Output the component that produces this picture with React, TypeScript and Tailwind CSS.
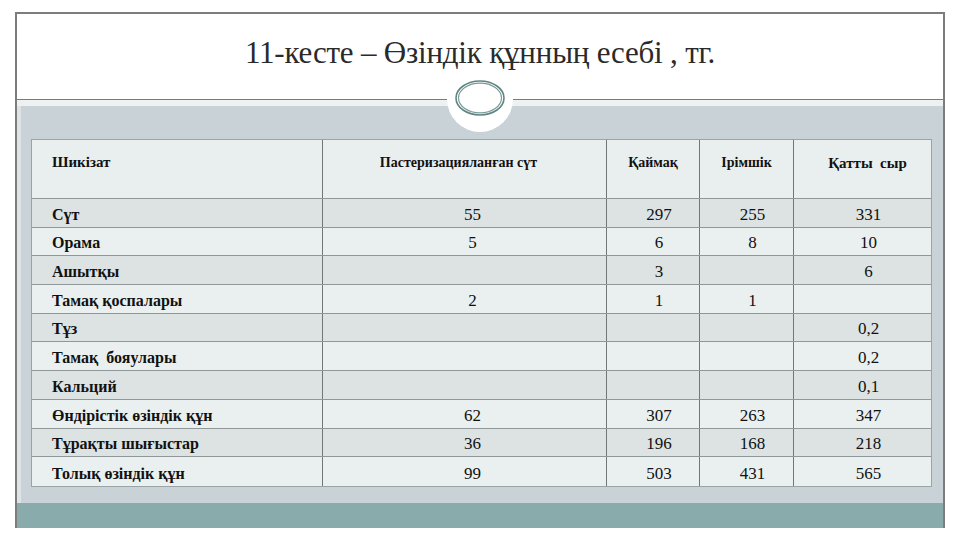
const rows = [
  ["Сүт", "55", "297", "255", "331"],
  ["Орама", "5", "6", "8", "10"],
  ["Ашытқы", "", "3", "", "6"],
  ["Тамақ қоспалары", "2", "1", "1", ""],
  ["Тұз", "", "", "", "0,2"],
  ["Тамақ  бояулары", "", "", "", "0,2"],
  ["Кальций", "", "", "", "0,1"],
  ["Өндірістік өзіндік құн", "62", "307", "263", "347"],
  ["Тұрақты шығыстар", "36", "196", "168", "218"],
  ["Толық өзіндік құн", "99", "503", "431", "565"],
];

const cols = "grid grid-cols-[291px_284px_93px_94px_137px]";

export default function App() {
  return (
    <div className="w-[960px] h-[540px] bg-white overflow-hidden px-[15px] pt-[12px] font-['Liberation_Serif',serif] text-[#111]">
      <div className="relative flex flex-col h-[516px] border-x-2 border-t-2 border-[#7d7d7d]">
        {/* title */}
        <div className="h-[86px] flex items-center justify-center pb-[8px] border-b border-[#7a7a7a]">
          <h1 className="text-[31px] leading-none tracking-[-0.2px] text-[#2a2a2a]">
            11-кесте – Өзіндік құнның есебі , тг.
          </h1>
        </div>
        <div className="h-[6px] bg-[#eef1f1]" />

        {/* ornament */}
        <div className="absolute left-1/2 top-[52px] -translate-x-1/2 w-[66px] h-[66px] rounded-full bg-white flex items-center justify-center">
          <svg width="54" height="40" viewBox="0 0 54 40">
            <ellipse cx="27" cy="19" rx="24" ry="17" fill="none" stroke="#5f8584" strokeWidth="1.6" />
            <ellipse cx="27" cy="19" rx="21.5" ry="14.8" fill="none" stroke="#7c9a99" strokeWidth="1.2" />
          </svg>
        </div>

        {/* table area */}
        <div className="flex-1 bg-[#c9d2d7] pt-[33px] pl-[10px] border-l-4 border-[#dde3e6]">
          <div className="w-[901px] border border-[#9aa3a5] bg-[#eaf0ef]">
            <div className={`${cols} h-[59px] font-bold bg-[#e9efee] border-b border-[#8f9799]`}>
              <div className="pl-[20px] pt-[11px] text-[15px] border-r border-[#6f7777]">Шикізат</div>
              <div className="text-center pt-[12px] pr-[12px] text-[14px] border-r border-[#6f7777]">Пастеризацияланған сүт</div>
              <div className="text-center pt-[12px] text-[14px] border-r border-[#6f7777]">Қаймақ</div>
              <div className="text-center pt-[12px] text-[14px] border-r border-[#6f7777]">Ірімшік</div>
              <div className="text-center pt-[12px] pl-[10px] text-[15px] whitespace-pre">Қатты  сыр</div>
            </div>
            {rows.map((r, i) => (
              <div
                key={i}
                className={`${cols} h-[28.7px] ${i % 2 === 0 ? "bg-[#dce3e2]" : "bg-[#eaf0ef]"} ${i < rows.length - 1 ? "border-b border-[#8f9799]" : ""}`}
              >
                <div className="flex items-end pb-[4px] pl-[20px] text-[16px] leading-none font-bold whitespace-pre border-r border-[#6f7777]">
                  {r[0]}
                </div>
                {r.slice(1).map((v, j) => (
                  <div
                    key={j}
                    className={`flex items-end justify-center pb-[4px] text-[17px] leading-none font-['Liberation_Serif',serif] ${j === 0 ? "pl-[16px]" : "pl-[12px]"} ${j < 3 ? "border-r border-[#6f7777]" : ""}`}
                  >
                    {v}
                  </div>
                ))}
              </div>
            ))}
          </div>
        </div>

        {/* bottom band */}
        <div className="h-[25px] bg-[#89abab]" />
      </div>
    </div>
  );
}
